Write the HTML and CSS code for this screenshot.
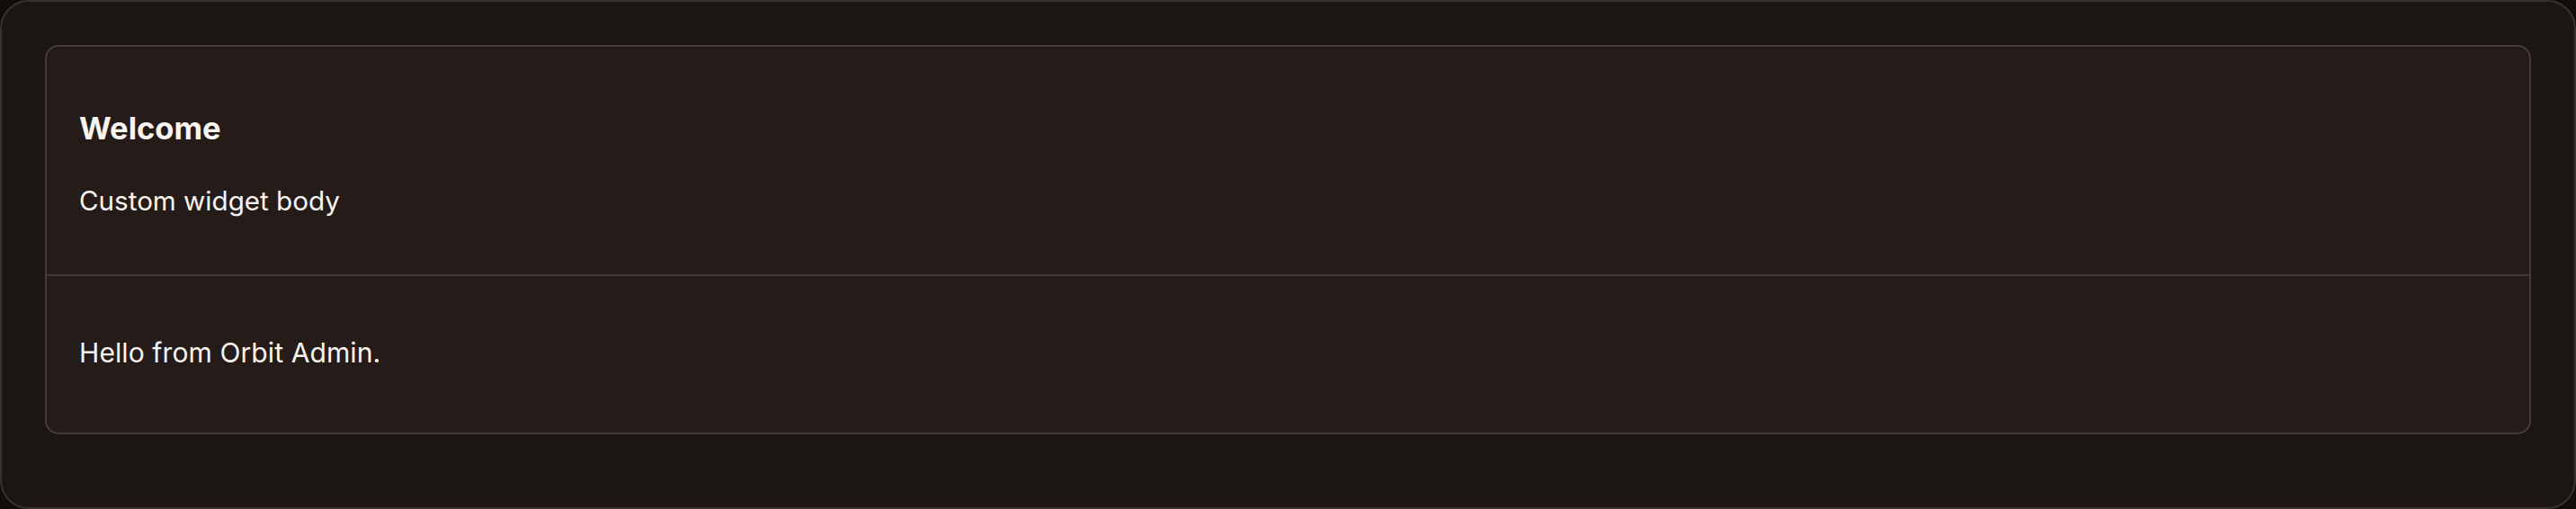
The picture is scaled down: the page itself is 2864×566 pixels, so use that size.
FILE: index.html
```html
<!DOCTYPE html>
<html lang="en">
<head>
<meta charset="utf-8">
<title>Welcome</title>
<link rel="stylesheet" href="styles.css">
</head>
<body>
<div class="frame">
  <section class="card">
    <div class="card-header">
      <h2 class="title">Welcome</h2>
      <p class="subtitle">Custom widget body</p>
    </div>
    <div class="card-body">
      <p class="text">Hello from Orbit Admin.</p>
    </div>
  </section>
</div>
</body>
</html>
```
FILE: styles.css
```css
* { box-sizing: border-box; }
html, body {
  margin: 0;
  padding: 0;
  background: #110d0b;
  height: 100%;
}
body {
  font-family: "Inter", "Lato", sans-serif;
  color: #f8f4f0;
}
.frame {
  height: 566px;
  background: #1b1612;
  border: 2px solid #3a312c;
  border-radius: 32px;
  padding: 48px 48px 0 48px;
}
.card {
  background: #251c1a;
  border: 2px solid #463d37;
  border-radius: 15px;
  display: flex;
  flex-direction: column;
}
.card-header {
  padding: 70px 36px 64px 36px;
  border-bottom: 2px solid #3f3732;
}
.title {
  margin: 0;
  font-size: 34.5px;
  line-height: 42px;
  font-weight: 700;
}
.subtitle {
  margin: 41px 0 0 0;
  font-size: 29.6px;
  line-height: 36px;
  font-weight: 400;
}
.card-body {
  padding: 67px 36px 71px 36px;
}
.text {
  margin: 0;
  font-size: 30px;
  line-height: 36px;
  letter-spacing: 0.1px;
}
```
